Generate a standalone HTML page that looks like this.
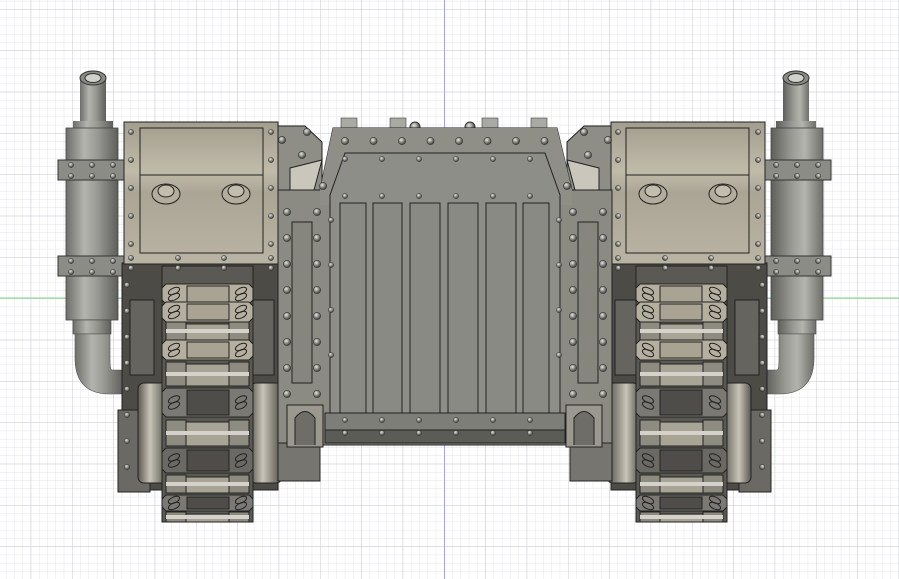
<!DOCTYPE html>
<html><head><meta charset="utf-8"><style>
html,body{margin:0;padding:0;background:#fff;width:899px;height:579px;overflow:hidden}
svg{display:block}
</style></head><body>
<svg id="s" width="899" height="579" viewBox="0 0 899 579" xmlns="http://www.w3.org/2000/svg">
<defs>
<pattern id="minor" width="8.266" height="8.266" patternUnits="userSpaceOnUse" patternTransform="translate(30.7,9.1)">
<path d="M0 0H8.266M0 0V8.266" stroke="#e3e5ea" stroke-width="1" fill="none"/></pattern>
<pattern id="major" width="41.33" height="41.33" patternUnits="userSpaceOnUse" patternTransform="translate(30.7,9.1)">
<path d="M0 0H41.33M0 0V41.33" stroke="#c8cbd2" stroke-width="1" fill="none"/></pattern>
<linearGradient id="tube" x1="0" x2="1"><stop offset="0" stop-color="#6e6e6a"/><stop offset=".35" stop-color="#b4b4ae"/><stop offset=".6" stop-color="#9a9a95"/><stop offset="1" stop-color="#5e5e5a"/></linearGradient>
<linearGradient id="box" x1="0" y1="0" x2="0" y2="1"><stop offset="0" stop-color="#a29d8d"/><stop offset=".35" stop-color="#c0bba9"/><stop offset=".5" stop-color="#aaa595"/><stop offset="1" stop-color="#b9b4a3"/></linearGradient>
<linearGradient id="drum" x1="0" x2="1"><stop offset="0" stop-color="#5a5852"/><stop offset=".4" stop-color="#c8c4b6"/><stop offset="1" stop-color="#4e4c47"/></linearGradient>
<radialGradient id="rv" cx=".4" cy=".35" r=".7"><stop offset="0" stop-color="#e8e8e4"/><stop offset=".5" stop-color="#8a8a84"/><stop offset="1" stop-color="#2e2e2c"/></radialGradient>
<g id="r"><circle r="3.6" fill="url(#rv)" stroke="#333" stroke-width=".6"/></g>
<g id="rs"><circle r="2.6" fill="url(#rv)" stroke="#333" stroke-width=".5"/></g>
<g id="exh">
 <!-- top pipe -->
 <rect x="80" y="78" width="26" height="50" fill="url(#tube)"/>
 <ellipse cx="93" cy="78" rx="13" ry="7" fill="#8a8a85" stroke="#333"/>
 <ellipse cx="93" cy="78" rx="8" ry="4.5" fill="#d0d0cc" stroke="#333"/>
 <rect x="73" y="121" width="40" height="8" fill="url(#tube)"/>
 <!-- muffler -->
 <rect x="66" y="128" width="52" height="192" fill="url(#tube)" stroke="#444" stroke-width=".8"/>
 <rect x="73" y="320" width="38" height="14" fill="url(#tube)" stroke="#444" stroke-width=".6"/>
 <!-- elbow -->
 <path d="M75 334 V358 Q75 394 110 394 H123 V370 H112 Q110 370 110 358 V334 Z" fill="url(#tube)" stroke="#555" stroke-width=".6"/>
 <!-- clamps -->
 <rect x="58" y="160" width="66" height="20" fill="#8c8c86" stroke="#333"/>
 <rect x="58" y="256" width="66" height="20" fill="#8c8c86" stroke="#333"/>
 <use href="#rs" x="71" y="165"/><use href="#rs" x="92" y="165"/><use href="#rs" x="113" y="165"/>
 <use href="#rs" x="71" y="176"/><use href="#rs" x="92" y="176"/><use href="#rs" x="113" y="176"/>
 <use href="#rs" x="71" y="261"/><use href="#rs" x="92" y="261"/><use href="#rs" x="113" y="261"/>
 <use href="#rs" x="71" y="272"/><use href="#rs" x="92" y="272"/><use href="#rs" x="113" y="272"/>
 <!-- lower side dark frame -->
 <rect x="122" y="263" width="156" height="227" fill="#4c4b46" stroke="#222"/>
 <rect x="118" y="410" width="32" height="82" fill="#6a6964" stroke="#222"/>
 <rect x="130" y="300" width="24" height="75" fill="#65645e" stroke="#222"/>
 <rect x="252" y="300" width="22" height="75" fill="#65645e" stroke="#222"/>
 <!-- drums -->
 <rect x="138" y="383" width="30" height="100" rx="6" fill="url(#drum)" stroke="#222"/>
 <rect x="250" y="383" width="32" height="100" rx="6" fill="url(#drum)" stroke="#222"/>
 <g id="track"></g>
 <!-- upper box -->
 <rect x="124" y="122" width="154" height="142" fill="url(#box)" stroke="#222"/>
 <rect x="140" y="128" width="123" height="125" fill="none" stroke="#222"/>
 <line x1="140" y1="175" x2="263" y2="175" stroke="#222"/>
 <ellipse cx="166" cy="194" rx="14" ry="10" fill="#b2ad9c" stroke="#222"/>
 <ellipse cx="166" cy="191" rx="8" ry="6" fill="#c2bdac" stroke="#222"/>
 <ellipse cx="236" cy="194" rx="14" ry="10" fill="#b2ad9c" stroke="#222"/>
 <ellipse cx="236" cy="191" rx="8" ry="6" fill="#c2bdac" stroke="#222"/>
 <!-- gusset -->
 <path d="M278 126 H305 L322 142 V200 L310 225 H278 Z" fill="#8e8d86" stroke="#222"/>
 <path d="M290 168 L322 160 L310 205 H290 Z" fill="#c9c6bb" stroke="#222"/>
 <g id="boxriv"></g>
</g>
</defs>
<rect width="899" height="579" fill="#fff"/>
<rect width="899" height="579" fill="url(#minor)"/>
<rect width="899" height="579" fill="url(#major)"/>
<line x1="0" y1="298" x2="899" y2="298" stroke="#8ad88a" stroke-width="1"/>
<line x1="444.5" y1="0" x2="444.5" y2="579" stroke="#a4a4f2" stroke-width="1"/>

<use href="#exh"/>
<use href="#exh" transform="translate(889,0) scale(-1,1)"/>

<!-- center top cylinders -->
<g fill="#a9a9a3" stroke="#444" stroke-width=".6">
<rect x="341" y="118" width="16" height="11"/><rect x="390" y="118" width="16" height="11"/>
<rect x="482" y="118" width="16" height="11"/><rect x="531" y="118" width="16" height="11"/>
</g>
<circle cx="415" cy="127" r="5" fill="url(#rv)" stroke="#333"/>
<circle cx="470" cy="127" r="5" fill="url(#rv)" stroke="#333"/>
<!-- center body -->
<path d="M333 128 H557 L572 190 H612 V445 H278 V190 H320 Z" fill="#8b8b84" stroke="#222"/>
<path d="M333 128 H557 L572 190 V205 H320 V190 Z" fill="#8f8f88"/>
<path d="M345 153 H545 L560 195 V413 H330 V195 Z" fill="#8e8e88" stroke="#222"/>
<g fill="#8a8a84" stroke="#222" stroke-width="1">
<rect x="340" y="203" width="26" height="210"/><rect x="373" y="203" width="29" height="210"/>
<rect x="410" y="203" width="30" height="210"/><rect x="448" y="203" width="30" height="210"/>
<rect x="486" y="203" width="30" height="210"/><rect x="523" y="203" width="26" height="210"/>
</g>
<rect x="292" y="222" width="20" height="161" fill="#86867f" stroke="#222"/>
<rect x="578" y="222" width="20" height="161" fill="#86867f" stroke="#222"/>
<rect x="325" y="413" width="240" height="30" fill="#7e7e78" stroke="#222"/>
<rect x="325" y="430" width="240" height="13" fill="#5c5c57" stroke="#222"/>
<!-- alcoves -->
<rect x="278" y="443" width="42" height="38" fill="#76756f" stroke="#222"/>
<rect x="570" y="443" width="42" height="38" fill="#76756f" stroke="#222"/>
<rect x="287" y="405" width="36" height="42" fill="#9a988f" stroke="#222"/>
<path d="M295 445 V418 Q305 405 315 418 V445" fill="#6e6d67" stroke="#222"/>
<rect x="566" y="405" width="36" height="42" fill="#9a988f" stroke="#222"/>
<path d="M574 445 V418 Q584 405 594 418 V445" fill="#6e6d67" stroke="#222"/>
<g id="crv"></g>
<script>
(function(){
var NS="http://www.w3.org/2000/svg";
function u(p,id,x,y){var e=document.createElementNS(NS,"use");e.setAttribute("href","#"+id);e.setAttribute("x",x);e.setAttribute("y",y);p.appendChild(e);}
function el(p,t,a){var e=document.createElementNS(NS,t);for(var k in a)e.setAttribute(k,a[k]);p.appendChild(e);return e;}
// box rivets
var b=document.getElementById("boxriv");
for(var y=132;y<260;y+=28){u(b,"rs",131,y);u(b,"rs",271,y);}
[131,178,224,271].forEach(function(x){u(b,"rs",x,258);u(b,"rs",x,268);});
for(var y=285;y<480;y+=26){u(b,"rs",127,y);}
// track
var t=document.getElementById("track");
el(t,"rect",{x:162,y:266,width:91,height:256,fill:"#5a5954",stroke:"#222"});
var pads=[[284,20,"#b4af9e"],[302,20,"#b4af9e"],[340,20,"#b4af9e"],[388,29,"#7a7973"],[448,25,"#6a6964"],[495,16,"#7a7973"]];
pads.forEach(function(p){
 var y=p[0],h=p[1];
 el(t,"path",{d:"M166 "+y+" H249 L253 "+(y+4)+" V"+(y+h-4)+" L249 "+(y+h)+" H166 L162 "+(y+h-4)+" V"+(y+4)+" Z",fill:p[2],stroke:"#222"});
 el(t,"rect",{x:187,y:y+2,width:42,height:h-4,fill:p[2]=="#b4af9e"?"#a8a392":"#4e4d49",stroke:"#222"});
 el(t,"ellipse",{cx:174,cy:y+h/2-3,rx:6,ry:3,fill:"none",stroke:"#222","transform":"rotate(-25 174 "+(y+h/2-3)+")"});
 el(t,"ellipse",{cx:174,cy:y+h/2+3,rx:6,ry:3,fill:"none",stroke:"#222","transform":"rotate(-25 174 "+(y+h/2+3)+")"});
 el(t,"ellipse",{cx:241,cy:y+h/2-3,rx:6,ry:3,fill:"none",stroke:"#222","transform":"rotate(-25 241 "+(y+h/2-3)+")"});
 el(t,"ellipse",{cx:241,cy:y+h/2+3,rx:6,ry:3,fill:"none",stroke:"#222","transform":"rotate(-25 241 "+(y+h/2+3)+")"});
});
[[322,18],[362,24],[420,26],[475,18],[512,10]].forEach(function(p){
 el(t,"rect",{x:166,y:p[0],width:20,height:p[1],fill:"#8e8b80",stroke:"#222"});
 el(t,"rect",{x:229,y:p[0],width:20,height:p[1],fill:"#8e8b80",stroke:"#222"});
 el(t,"rect",{x:186,y:p[0]+2,width:43,height:p[1]-2,fill:"#a8a496",stroke:"#222"});
 el(t,"rect",{x:166,y:p[0]+p[1]/2-2,width:83,height:4,fill:"#d4d2cb"});
});
// center rivets
var c=document.getElementById("crv");
for(var x=345;x<=550;x+=28.5)u(c,"r",x,141);
for(var x=345;x<=545;x+=37)u(c,"rs",x,159);
for(var x=345;x<=545;x+=37)u(c,"rs",x,196);
for(var x=345;x<=545;x+=37){u(c,"rs",x,420);u(c,"rs",x,433);}
for(var y=212;y<400;y+=26){u(c,"r",287,y);u(c,"r",317,y);u(c,"r",573,y);u(c,"r",603,y);}
for(var y=220;y<400;y+=45){u(c,"rs",331,y);u(c,"rs",559,y);}
[[282,140],[307,132],[302,155],[584,132],[608,140],[588,155],[323,186],[567,186]].forEach(function(p){u(c,"r",p[0],p[1]);});
})();
</script>
</svg>
</body></html>
